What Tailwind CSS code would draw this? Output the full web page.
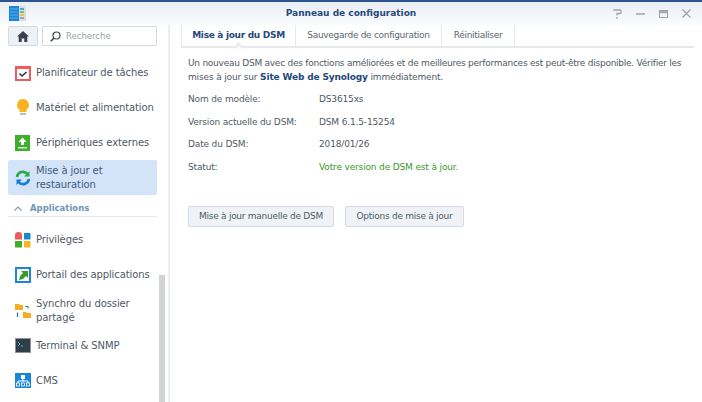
<!DOCTYPE html>
<html lang="fr">
<head>
  <meta charset="UTF-8">
  <title>Panneau de configuration</title>
  <script src="https://cdn.jsdelivr.net/npm/@tailwindcss/browser@4"></script>
</head>
<body class="w-[702px] h-[402px] overflow-hidden bg-white font-['DejaVu_Sans',sans-serif] text-[9px] text-[#505a64] flex flex-col">
  <div class="h-[2px] bg-[#2a5490]"></div>

  <!-- title bar -->
  <div class="h-[23px] shrink-0 relative bg-gradient-to-b from-[#e9eef4] to-[#fbfcfd] flex items-center justify-between pl-[9px] pr-[11px]">
    <svg width="17" height="15" viewBox="0 0 17 15">
      <rect x="0" y="0" width="10" height="15" fill="#1a86d8"/>
      <path d="M1 3h8M1 6h8M1 9h8M1 12h8" stroke="#7cc2f0" stroke-width=".7"/>
      <rect x="10" y="0" width="7" height="15" fill="#d9dee3"/>
      <rect x="11" y="2" width="4" height="2" fill="#4fa3d8"/>
      <rect x="11" y="5" width="4" height="2" fill="#7cc06a"/>
      <rect x="11" y="8" width="4" height="2" fill="#e6c34e"/>
      <rect x="11" y="11" width="4" height="2" fill="#9aa6b0"/>
    </svg>
    <div class="absolute inset-x-0 text-center text-[#26487c] font-bold text-[9px]">Panneau de configuration</div>
    <div class="flex items-center gap-[14px]">
      <svg width="9" height="10" viewBox="0 0 9 10" fill="none" stroke="#9aa3ad" stroke-width="1.300"><path d="M.5 1h6.500q1 0 1 1v1.500q0 1-1 1H4v2M4 8v2"/></svg>
      <svg width="9" height="10" viewBox="0 0 9 10" fill="none" stroke="#9aa3ad" stroke-width="1.500"><path d="M0 5h9"/></svg>
      <svg width="9" height="8" viewBox="0 0 9 8" fill="none" stroke="#9aa3ad"><rect x=".5" y=".5" width="8" height="7"/><path d="M0 2.200h9" stroke-width="2"/></svg>
      <svg width="9" height="9" viewBox="0 0 9 9" fill="none" stroke="#9aa3ad" stroke-width="1.200"><path d="M.5.500l8 8M8.500.500l-8 8"/></svg>
    </div>
  </div>

  <div class="flex flex-1 min-h-0">
    <!-- sidebar -->
    <aside class="w-[170px] shrink-0 relative border-r-[2px] border-[#eceef0] pl-[8px] pr-[11px] overflow-hidden">
      <div class="flex gap-[4px] h-[20px] mt-[1px]">
        <div class="w-[30px] rounded-[2px] border border-[#d3dae2] bg-[#eef2f6] flex items-center justify-center">
          <svg width="12" height="11" viewBox="0 0 12 11" fill="#39424c"><path d="M6 0L0 5.500h1.700V11h3V7.500h2.600V11h3V5.500H12z"/></svg>
        </div>
        <div class="flex-1 border border-[#d3dae2] rounded-[1px] flex items-center pl-[7px] gap-[5px] text-[#9aa3ad] text-[8.500px]">
          <svg width="11" height="11" viewBox="0 0 11 11" fill="none" stroke="#3d4650" stroke-width="1.200"><circle cx="6.500" cy="4.500" r="3.500"/><path d="M4 7L.8 10.200" stroke-width="1.600"/></svg>
          Recherche
        </div>
      </div>

      <div class="flex flex-col mt-[9px] text-[#4f5964] text-[10px] tracking-[-0.1px] leading-[14px] whitespace-nowrap">
        <div class="h-[35px] flex items-center pl-[7px] gap-[5px]">
          <svg class="shrink-0" width="16" height="16" viewBox="0 0 16 16"><rect x="1" y="2" width="14" height="13" fill="#fff" stroke="#ee5b5f" stroke-width="2"/><path d="M0 1h16v3H0z" fill="#ee5b5f"/><path d="M4.500 8.500l2.500 2.500 4.500-4" fill="none" stroke="#2f363d" stroke-width="1.600"/></svg>
          <span>Planificateur de tâches</span>
        </div>
        <div class="h-[35px] flex items-center pl-[7px] gap-[5px]">
          <svg class="shrink-0" width="16" height="17" viewBox="0 0 16 17"><path d="M8 0a6 6 0 0 0-3.500 10.800V13h7v-2.200A6 6 0 0 0 8 0z" fill="#fbb324"/><rect x="5" y="14" width="6" height="2" fill="#b9bec4"/></svg>
          <span>Matériel et alimentation</span>
        </div>
        <div class="h-[35px] flex items-center pl-[7px] gap-[5px]">
          <svg class="shrink-0" width="16" height="16" viewBox="0 0 16 16"><rect width="15" height="16" fill="#3fae2a"/><path d="M7.500 2.500L3.500 7h2.500v3h3V7h2.500z" fill="#fff"/><rect x="3" y="12" width="9" height="1.500" fill="#d6efcf"/></svg>
          <span>Périphériques externes</span>
        </div>
        <div class="h-[35px] flex items-center pl-[7px] gap-[5px] rounded-[2px] bg-[#d3e4f8] text-[#3f5a78]">
          <svg class="shrink-0" width="16" height="16" viewBox="0 0 16 16" fill="none" stroke-width="2.600"><path d="M2 7a6 6 0 0 1 10.500-3" stroke="#2ba84a"/><path d="M14 9a6 6 0 0 1-10.500 3" stroke="#0f7fd6"/><path d="M14.500 1v5.500H9z" fill="#2ba84a"/><path d="M1.500 15V9.500H7z" fill="#0f7fd6"/></svg>
          <span>Mise à jour et<br>restauration</span>
        </div>
        <div class="h-[22px] pt-[5px] flex items-center gap-[8px] pl-[6px] border-b border-[#e8ebee] text-[#6f94b8] font-bold text-[8.500px] tracking-normal">
          <svg width="8" height="5" viewBox="0 0 8 5" fill="none" stroke="#7d9cbb" stroke-width="1.200"><path d="M.5 4.500L4 1l3.500 3.500"/></svg>
          Applications
        </div>
        <div class="h-[35px] mt-[5px] flex items-center pl-[7px] gap-[5px]">
          <svg class="shrink-0" width="16" height="16" viewBox="0 0 16 16"><path d="M0 7.500V3a3.500 3 0 0 1 7 0v4.500z" fill="#ee5b5f"/><rect x="9" y="1" width="6.500" height="6.500" fill="#1a86d8"/><rect y="9" width="7" height="6.500" fill="#3fae2a"/><rect x="9" y="9" width="6.500" height="6.500" fill="#fbb324"/></svg>
          <span>Privilèges</span>
        </div>
        <div class="h-[36px] flex items-center pl-[7px] gap-[5px]">
          <svg class="shrink-0" width="16" height="16" viewBox="0 0 16 16"><rect width="16" height="16" fill="#1a86d8"/><rect x="2" y="2" width="12" height="12" fill="#fff"/><path d="M4 13l1-4 3-3-2-2h7v7l-2-2-3 3z" fill="#3a9a2a"/></svg>
          <span>Portail des applications</span>
        </div>
        <div class="h-[35px] flex items-center pl-[7px] gap-[5px]">
          <svg class="shrink-0" width="16" height="16" viewBox="0 0 16 16"><path d="M0 1h4l1 1h3v5H0zM8 9h3l1 1h4v5H8z" fill="#f6ad1f"/><path d="M10 3.500h3v2" fill="none" stroke-width="1.200" stroke="#2ba84a"/><path d="M2.500 9.500v4.500" stroke="#0f7fd6" stroke-width="1.200"/></svg>
          <span>Synchro du dossier<br>partagé</span>
        </div>
        <div class="h-[35px] flex items-center pl-[7px] gap-[5px]">
          <svg class="shrink-0" width="16" height="15" viewBox="0 0 16 15"><rect width="16" height="15" fill="#8a949e"/><rect x="1" y="1" width="14" height="13" fill="#2f3e48"/><path d="M3 4l2 2-2 2M6 8h2" fill="none" stroke="#7fd0e8" stroke-width=".8"/></svg>
          <span>Terminal &amp; SNMP</span>
        </div>
        <div class="h-[35px] flex items-center pl-[7px] gap-[5px]">
          <svg class="shrink-0" width="16" height="15" viewBox="0 0 16 15"><rect width="16" height="15" fill="#1a86d8"/><rect x="6" y="2" width="4" height="4" fill="#fff"/><path d="M8 6v3M3 10V8h10v2" fill="none" stroke="#fff"/><rect x="1.500" y="10" width="3" height="3" fill="none" stroke="#fff" stroke-width=".8"/><rect x="6.500" y="10" width="3" height="3" fill="none" stroke="#fff" stroke-width=".8"/><rect x="11.500" y="10" width="3" height="3" fill="none" stroke="#fff" stroke-width=".8"/></svg>
          <span>CMS</span>
        </div>
      </div>

      <div class="absolute left-[159px] top-[250px] bottom-0 w-[6px] bg-[#d2d3d4]"></div>
    </aside>

    <!-- content -->
    <main class="flex-1 min-w-0 pl-[11px] pr-[8px]">
      <div class="relative h-[21px] flex items-stretch border-b-[2px] border-[#e6e8ea] box-content text-[9px] tracking-[-0.3px]">
        <div class="w-[115px] flex items-center justify-center border-x border-[#e6eaee] text-[#26487c] font-bold">Mise à jour du DSM</div>
        <div class="w-[146px] flex items-center justify-center border-r border-[#e6eaee] text-[#5c6670]">Sauvegarde de configuration</div>
        <div class="w-[73px] flex items-center justify-center border-r border-[#e6eaee] text-[#5c6670]">Réinitialiser</div>
        <div class="absolute left-[54px] -bottom-[5px] w-[7px] h-[7px] rotate-45 bg-white border-l-2 border-t-2 border-[#e6e8ea]"></div>
      </div>

      <p class="mt-[8px] pl-[7px] text-[9px] tracking-[-0.15px] leading-[14px] whitespace-nowrap"><span class="tracking-[-0.25px]">Un nouveau DSM avec des fonctions améliorées et de meilleures performances est peut-être disponible. Vérifier les</span><br>mises à jour sur <b class="text-[#26487c]">Site Web de Synology</b> immédiatement.</p>

      <dl class="mt-[4.500px] pl-[7px] grid grid-cols-[131px_1fr] auto-rows-[22.700px] items-center text-[9px] tracking-[-0.15px]">
        <dt>Nom de modèle:</dt><dd>DS3615xs</dd>
        <dt>Version actuelle du DSM:</dt><dd>DSM 6.1.5-15254</dd>
        <dt>Date du DSM:</dt><dd>2018/01/26</dd>
        <dt>Statut:</dt><dd class="text-[#3a9a2a]">Votre version de DSM est à jour.</dd>
      </dl>

      <div class="mt-[26.500px] pl-[7px] flex gap-[11px] text-[9px] tracking-[-0.27px]">
        <button class="w-[146px] h-[21px] rounded-[2px] border border-[#d3dae2] bg-[#eff3f7]">Mise à jour manuelle de DSM</button>
        <button class="w-[119px] h-[21px] rounded-[2px] border border-[#d3dae2] bg-[#eff3f7]">Options de mise à jour</button>
      </div>
    </main>
  </div>
</body>
</html>
